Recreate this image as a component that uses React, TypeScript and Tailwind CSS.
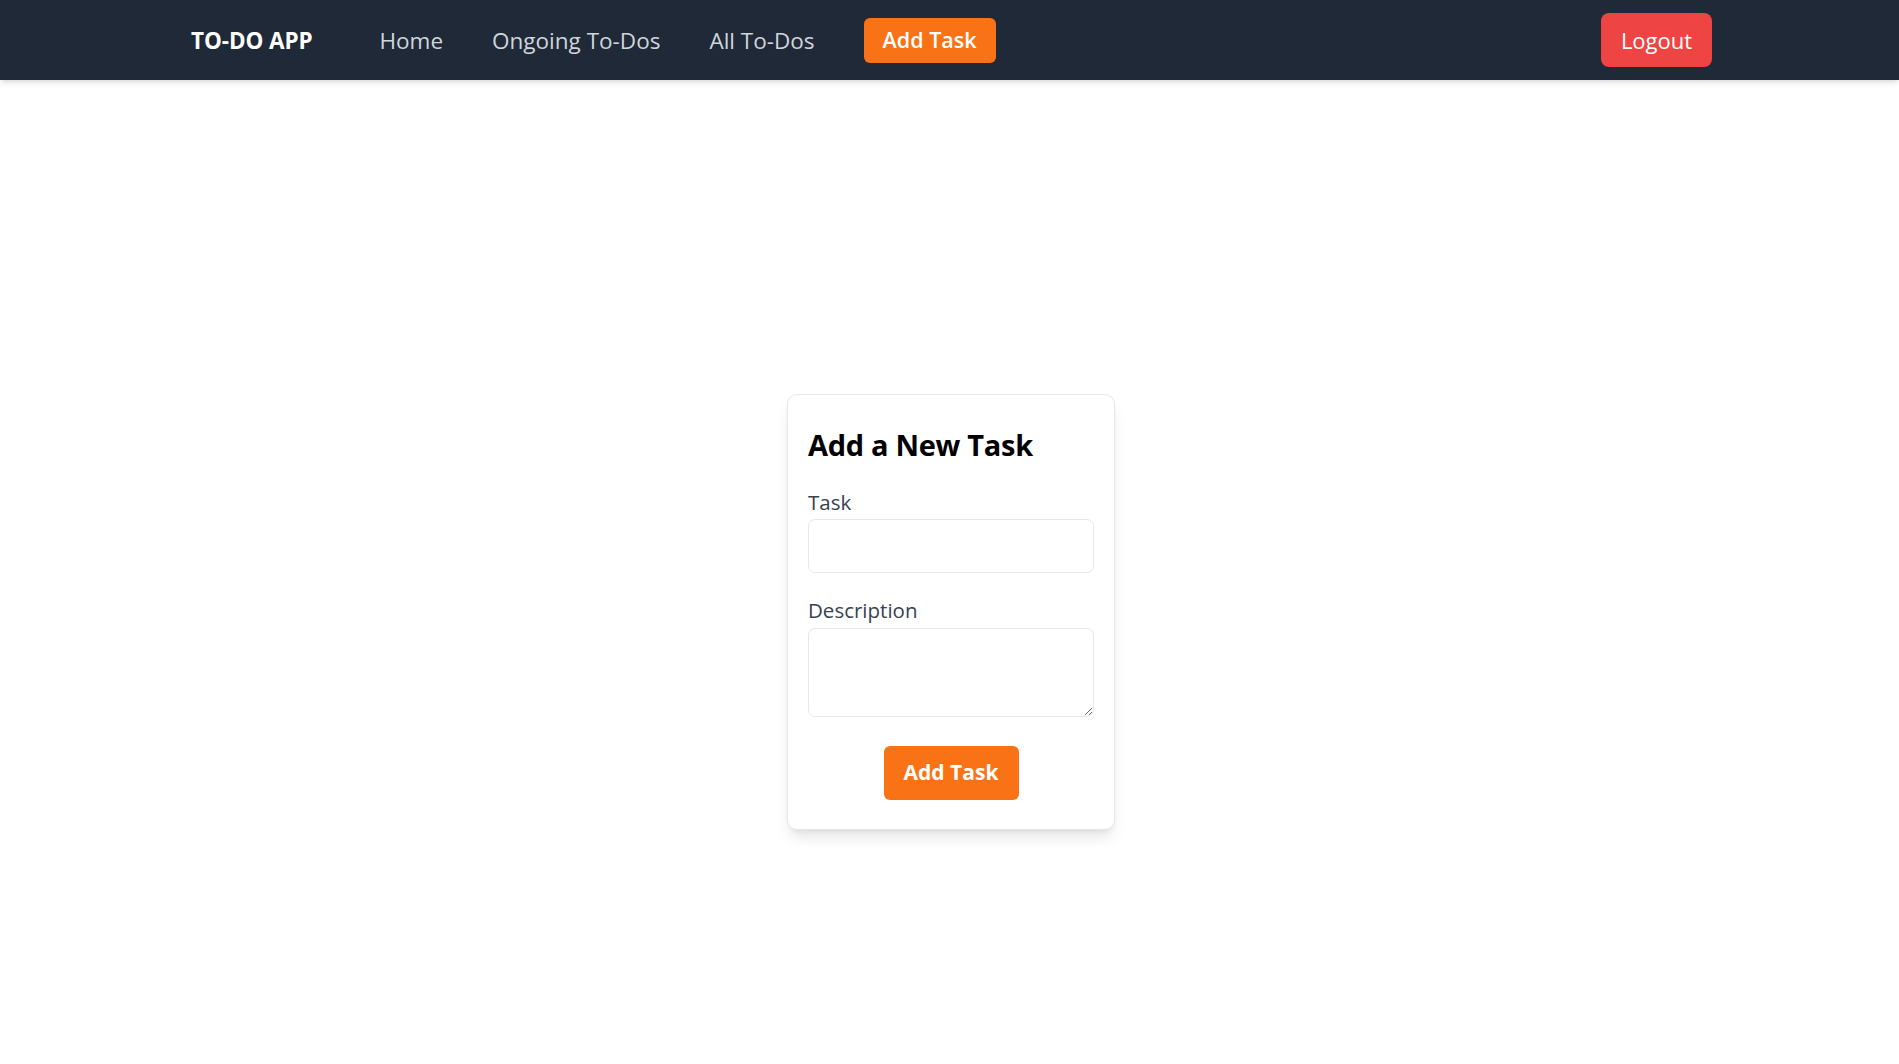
import React, { useState } from 'react';

const font = { fontFamily: '"Open Sans", "Noto Sans", sans-serif' };

const Navbar: React.FC = () => {
  return (
    <nav className="bg-[#1f2937] h-20 shadow-md relative z-10">
      <div className="pl-[191px] pr-[187px] h-full flex items-center justify-between pt-[2px]">
        <div className="flex items-center">
          <span className="text-white font-bold text-[22.5px] tracking-[-0.1px] mr-[67px]">TO-DO APP</span>
          <div className="flex items-center gap-[49px]">
            <a className="text-[#d1d5db] text-[22.5px] cursor-pointer">Home</a>
            <a className="text-[#d1d5db] text-[22.5px] cursor-pointer">Ongoing To-Dos</a>
            <a className="text-[#d1d5db] text-[22.5px] cursor-pointer">All To-Dos</a>
            <button className="bg-[#f97316] text-white font-semibold text-[21.5px] h-[45px] w-[132px] rounded-[6px] -mt-[1px]">
              Add Task
            </button>
          </div>
        </div>
        <button className="bg-[#ef4444] text-white text-[22px] h-[54px] w-[111px] rounded-[8px] -mt-[2px]">
          Logout
        </button>
      </div>
    </nav>
  );
};

const App: React.FC = () => {
  const [task, setTask] = useState('');
  const [description, setDescription] = useState('');

  const handleSubmit = (e: React.FormEvent) => {
    e.preventDefault();
    setTask('');
    setDescription('');
  };

  return (
    <div className="bg-white" style={font}>
      <Navbar />
      <div className="min-h-screen flex items-center justify-center pl-[3px]">
        <form
          onSubmit={handleSubmit}
          className="w-[328px] bg-white border border-[#e5e7eb] rounded-[10px] shadow-lg px-5 pt-[32px] pb-[29px] flex flex-col"
        >
          <h2 className="text-[29px] leading-[36px] font-bold text-black tracking-[-0.3px]">Add a New Task</h2>
          <label className="mt-[25px] text-[20.5px] leading-[28px] text-[#374151]">Task</label>
          <input
            type="text"
            value={task}
            onChange={e => setTask(e.target.value)}
            className="mt-[3px] h-[54px] w-full border border-[#e5e7eb] rounded-[7px] px-3 outline-none"
          />
          <label className="mt-[23px] text-[20.5px] leading-[28px] text-[#374151]">Description</label>
          <textarea
            value={description}
            onChange={e => setDescription(e.target.value)}
            className="mt-[4px] h-[89px] w-full border border-[#e5e7eb] rounded-[7px] px-3 py-2 outline-none block"
          />
          <div className="mt-[29px] flex justify-center">
            <button type="submit" className="bg-[#f97316] text-white font-bold text-[21px] h-[54px] w-[135px] rounded-[6px]">
              Add Task
            </button>
          </div>
        </form>
      </div>
    </div>
  );
};

export default App;
